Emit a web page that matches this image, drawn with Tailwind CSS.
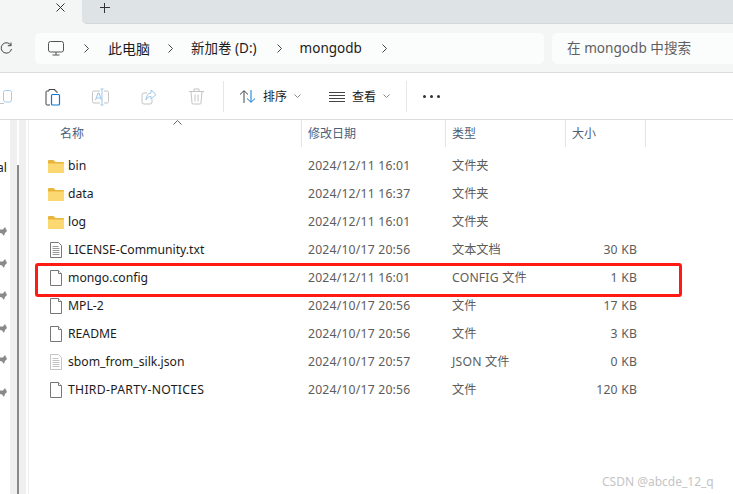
<!DOCTYPE html>
<html lang="zh-CN">
<head>
  <meta charset="UTF-8">
  <title>mongodb</title>
  <script src="https://cdn.jsdelivr.net/npm/@tailwindcss/browser@4"></script>
</head>
<body class="relative w-[733px] h-[494px] overflow-hidden bg-white font-['Noto_Sans','Noto_Sans_CJK_SC',sans-serif] text-[12.2px] text-[#1b1b1b]">

  <!-- tab strip -->
  <div class="flex h-[24px] bg-[#f4f6f6]">
    <div class="flex w-[82px] justify-end pr-[17px] pt-[3px]">
      <svg width="9" height="9" viewBox="0 0 9 9" fill="none" stroke="#333" stroke-width="1"><path d="M.5.5l8 8M8.500.5l-8 8"/></svg>
    </div>
    <div class="flex-1 rounded-bl-[5px] border-b border-[#d3d7d9] bg-[#dee3e6] pl-[18px] pt-[3px]">
      <svg width="10" height="10" viewBox="0 0 10 10" fill="none" stroke="#333" stroke-width="1"><path d="M4.500 0v10M0 4.500h10"/></svg>
    </div>
  </div>

  <!-- address row -->
  <div class="flex h-[49px] items-center border-b border-[#d9dcdc] bg-[#f4f6f6]">
    <div class="flex w-[35px] items-center">
      <svg width="12" height="13" viewBox="0 0 12 13" fill="none" stroke="#444" stroke-width="1"><path d="M11 3.500A5.200 5.200 0 1 0 11.500 7M11 .5v3.200H7.800"/></svg>
    </div>
    <div class="flex h-[31px] w-[509px] items-center rounded-[5px] bg-[#fbfcfc] pl-[13px] text-[13.5px]">
      <svg width="16" height="15" viewBox="0 0 16 15" fill="none" stroke="#555" stroke-width="1"><rect x=".5" y=".5" width="15" height="10.500" rx="2"/><path d="M8 11v3M4.500 14h7"/></svg>
      <svg class="ml-[20px]" width="5" height="9" viewBox="0 0 5 9" fill="none" stroke="#444"><path d="M.5.5l4 4-4 4"/></svg>
      <span class="ml-[19px] text-[14px]">此电脑</span>
      <svg class="ml-[18px]" width="5" height="9" viewBox="0 0 5 9" fill="none" stroke="#444"><path d="M.5.5l4 4-4 4"/></svg>
      <span class="ml-[18px]">新加卷 (D:)</span>
      <svg class="ml-[20px]" width="5" height="9" viewBox="0 0 5 9" fill="none" stroke="#444"><path d="M.5.5l4 4-4 4"/></svg>
      <span class="ml-[18px]">mongodb</span>
      <svg class="ml-[20px]" width="5" height="9" viewBox="0 0 5 9" fill="none" stroke="#444"><path d="M.5.5l4 4-4 4"/></svg>
    </div>
    <div class="ml-[8px] flex h-[31px] flex-1 items-center rounded-l-[5px] bg-[#fbfcfc] pl-[15px] text-[13.6px] text-[#5f5f5f]">在 mongodb 中搜索</div>
  </div>

  <!-- command bar -->
  <div class="flex h-[47px] items-center border-b border-[#d9dcdc] bg-white pt-[1px]">
    <svg width="12" height="16" viewBox="0 0 12 16" fill="none"><path d="M0 14.500h4" stroke="#c4c4c4"/><rect x="3.500" y="1.500" width="8" height="11.500" rx="2" stroke="#9fcdf2"/></svg>
    <svg class="ml-[33px]" width="16" height="18" viewBox="0 0 16 18" fill="none"><path d="M4 3H2a1 1 0 0 0-1 1v12a1 1 0 0 0 1 1h3" stroke="#444"/><path d="M4 3V1.500h6V3M10 3h1a1 1 0 0 1 1 1v1" stroke="#444"/><rect x="6.500" y="6.500" width="8" height="10.500" rx="1" stroke="#0b78d4" stroke-width="1.200"/></svg>
    <svg class="ml-[31px]" width="17" height="18" viewBox="0 0 17 18" fill="none" stroke="#c4c4c4"><path d="M8 3H2a1.500 1.500 0 0 0-1.500 1.500v9A1.500 1.500 0 0 0 2 15h6M12 3h3a1.500 1.500 0 0 1 1.500 1.500v9A1.500 1.500 0 0 1 15 15h-3"/><path d="M3.500 12l2.500-7h1l2.500 7M4.500 10h4" stroke="#9fc6e8"/><path d="M8.500 1h3M10 1v16M8.500 17h3" stroke="#9fc6e8"/></svg>
    <svg class="ml-[32px]" width="16" height="16" viewBox="0 0 16 16" fill="none" stroke="#c4c4c4"><path d="M11 10v3a2 2 0 0 1-2 2H3a2 2 0 0 1-2-2V6a2 2 0 0 1 2-2h3"/><path d="M10 1l5 4.500-5 4.500V7.500C7.500 7.500 6 8.500 5 11c0-4 2-6.500 5-7z" stroke="#9fc6e8"/></svg>
    <svg class="ml-[32px]" width="15" height="17" viewBox="0 0 15 17" fill="none" stroke="#c4c4c4"><path d="M0 3.500h15M5 3.500V1h5v2.500M2 3.500l1 11.500a1 1 0 0 0 1 1h7a1 1 0 0 0 1-1l1-11.500M6 6.500v7M9 6.500v7"/></svg>
    <div class="ml-[19px] h-[31px] w-px bg-[#e6e6e6]"></div>
    <svg class="ml-[15px]" width="17" height="13" viewBox="0 0 17 13" fill="none"><path d="M5 13V1M1 4.500L5 .7l4 3.800" stroke="#444"/><path d="M12 0v12M8 8.500l4 3.800 4-3.800" stroke="#0b78d4"/></svg>
    <span class="ml-[7px] text-[12px]">排序</span>
    <svg class="ml-[7px]" width="7" height="5" viewBox="0 0 7 5" fill="none" stroke="#888"><path d="M.5.5l3 3 3-3"/></svg>
    <svg class="ml-[28px]" width="16" height="10" viewBox="0 0 16 10" fill="none" stroke="#444"><path d="M0 .5h16M0 3.500h16M0 6.500h16M0 9.500h16"/></svg>
    <span class="ml-[7px] text-[12px]">查看</span>
    <svg class="ml-[7px]" width="7" height="5" viewBox="0 0 7 5" fill="none" stroke="#888"><path d="M.5.5l3 3 3-3"/></svg>
    <div class="ml-[16px] h-[31px] w-px bg-[#e6e6e6]"></div>
    <div class="ml-[16px] flex gap-[4px]">
      <span class="size-[3px] rounded-full bg-[#333]"></span>
      <span class="size-[3px] rounded-full bg-[#333]"></span>
      <span class="size-[3px] rounded-full bg-[#333]"></span>
    </div>
  </div>

  <div class="flex h-[374px]">
    <!-- nav pane sliver -->
    <div class="relative w-[10px] shrink-0 bg-white">
      <span class="absolute -left-[3px] top-[40px] text-[12px] leading-[16px]">al</span>
    </div>
    <div class="flex w-[19px] shrink-0 border-r border-[#f0f0f0] bg-white">
      <div class="w-[7px] bg-[#f0f0f0]"></div>
      <div class="mt-[45px] w-[2px] bg-[#8a8a8a]"></div>
      <div class="w-[7px] bg-[#f0f0f0]"></div>
    </div>

    <!-- file list -->
    <div class="flex-1">
      <div class="relative flex h-[27px] text-[12px] text-[#4c607a]">
        <div class="w-[272px] pl-[31px] leading-[27px]">名称</div>
        <div class="w-[144px] border-l border-[#e5e5e5] pl-[6px] leading-[27px]">修改日期</div>
        <div class="w-[120px] border-l border-[#e5e5e5] pl-[6px] leading-[27px]">类型</div>
        <div class="w-[81px] border-x border-[#e5e5e5] pl-[6px] leading-[27px]">大小</div>
        <svg class="absolute left-[144px] top-0" width="9" height="5" viewBox="0 0 9 5" fill="none" stroke="#666"><path d="M.5 4.500l4-4 4 4"/></svg>
      </div>
      <div id="rows" class="pt-[5px]">
        <div class="flex h-[28px] items-center">
          <svg class="ml-[19px]" width="16" height="14" viewBox="0 0 16 14"><path d="M0 2a1 1 0 0 1 1-1h4.500l2 2H15a1 1 0 0 1 1 1v9a1 1 0 0 1-1 1H1a1 1 0 0 1-1-1z" fill="#e8b53c"/><path d="M0 4.500h16V13a1 1 0 0 1-1 1H1a1 1 0 0 1-1-1z" fill="#fbd872"/></svg>
          <span class="ml-[4px] w-[240px]">bin</span><span class="w-[144px] tracking-[0.2px] text-[#5c5c5c]">2024/12/11 16:01</span><span class="w-[120px] text-[#5c5c5c]">文件夹</span>
        </div>
        <div class="flex h-[28px] items-center">
          <svg class="ml-[19px]" width="16" height="14" viewBox="0 0 16 14"><path d="M0 2a1 1 0 0 1 1-1h4.500l2 2H15a1 1 0 0 1 1 1v9a1 1 0 0 1-1 1H1a1 1 0 0 1-1-1z" fill="#e8b53c"/><path d="M0 4.500h16V13a1 1 0 0 1-1 1H1a1 1 0 0 1-1-1z" fill="#fbd872"/></svg>
          <span class="ml-[4px] w-[240px]">data</span><span class="w-[144px] tracking-[0.2px] text-[#5c5c5c]">2024/12/11 16:37</span><span class="w-[120px] text-[#5c5c5c]">文件夹</span>
        </div>
        <div class="flex h-[28px] items-center">
          <svg class="ml-[19px]" width="16" height="14" viewBox="0 0 16 14"><path d="M0 2a1 1 0 0 1 1-1h4.500l2 2H15a1 1 0 0 1 1 1v9a1 1 0 0 1-1 1H1a1 1 0 0 1-1-1z" fill="#e8b53c"/><path d="M0 4.500h16V13a1 1 0 0 1-1 1H1a1 1 0 0 1-1-1z" fill="#fbd872"/></svg>
          <span class="ml-[4px] w-[240px]">log</span><span class="w-[144px] tracking-[0.2px] text-[#5c5c5c]">2024/12/11 16:01</span><span class="w-[120px] text-[#5c5c5c]">文件夹</span>
        </div>
        <div class="flex h-[28px] items-center">
          <svg class="ml-[21px]" width="12" height="16" viewBox="0 0 12 16" fill="#fff" stroke="#777"><path d="M.5.500h8l3 3v12H.5z"/><path d="M2.500 4.500h6M2.500 6.500h7M2.500 8.500h7M2.500 10.500h7M2.500 12.500h7" stroke="#999"/></svg>
          <span class="ml-[6px] w-[240px]">LICENSE-Community.txt</span><span class="w-[144px] tracking-[0.2px] text-[#5c5c5c]">2024/10/17 20:56</span><span class="w-[120px] text-[#5c5c5c]">文本文档</span><span class="w-[65px] text-right tracking-[0.2px] text-[#5c5c5c]">30 KB</span>
        </div>
        <div class="flex h-[28px] items-center">
          <svg class="ml-[21px]" width="12" height="16" viewBox="0 0 12 16" fill="#fff" stroke="#777"><path d="M.5.500h8l3 3v12H.5z"/><path d="M8.500.500v3h3"/></svg>
          <span class="ml-[6px] w-[240px]">mongo.config</span><span class="w-[144px] tracking-[0.2px] text-[#5c5c5c]">2024/12/11 16:01</span><span class="w-[120px] tracking-[0.2px] text-[#5c5c5c]">CONFIG 文件</span><span class="w-[65px] text-right tracking-[0.2px] text-[#5c5c5c]">1 KB</span>
        </div>
        <div class="flex h-[28px] items-center">
          <svg class="ml-[21px]" width="12" height="16" viewBox="0 0 12 16" fill="#fff" stroke="#777"><path d="M.5.500h8l3 3v12H.5z"/><path d="M8.500.500v3h3"/></svg>
          <span class="ml-[6px] w-[240px]">MPL-2</span><span class="w-[144px] tracking-[0.2px] text-[#5c5c5c]">2024/10/17 20:56</span><span class="w-[120px] text-[#5c5c5c]">文件</span><span class="w-[65px] text-right tracking-[0.2px] text-[#5c5c5c]">17 KB</span>
        </div>
        <div class="flex h-[28px] items-center">
          <svg class="ml-[21px]" width="12" height="16" viewBox="0 0 12 16" fill="#fff" stroke="#777"><path d="M.5.500h8l3 3v12H.5z"/><path d="M8.500.500v3h3"/></svg>
          <span class="ml-[6px] w-[240px]">README</span><span class="w-[144px] tracking-[0.2px] text-[#5c5c5c]">2024/10/17 20:56</span><span class="w-[120px] text-[#5c5c5c]">文件</span><span class="w-[65px] text-right tracking-[0.2px] text-[#5c5c5c]">3 KB</span>
        </div>
        <div class="flex h-[28px] items-center">
          <svg class="ml-[21px]" width="12" height="16" viewBox="0 0 12 16" fill="#fff" stroke="#c4c4c4"><path d="M.5.500h8l3 3v12H.5z"/><path d="M2.500 4.500h6M2.500 6.500h7M2.500 8.500h7M2.500 10.500h7M2.500 12.500h7"/></svg>
          <span class="ml-[6px] w-[240px]">sbom_from_silk.json</span><span class="w-[144px] tracking-[0.2px] text-[#5c5c5c]">2024/10/17 20:57</span><span class="w-[120px] tracking-[0.2px] text-[#5c5c5c]">JSON 文件</span><span class="w-[65px] text-right tracking-[0.2px] text-[#5c5c5c]">0 KB</span>
        </div>
        <div class="flex h-[28px] items-center">
          <svg class="ml-[21px]" width="12" height="16" viewBox="0 0 12 16" fill="#fff" stroke="#777"><path d="M.5.500h8l3 3v12H.5z"/><path d="M8.500.500v3h3"/></svg>
          <span class="ml-[6px] w-[240px] tracking-[0.3px]">THIRD-PARTY-NOTICES</span><span class="w-[144px] tracking-[0.2px] text-[#5c5c5c]">2024/10/17 20:56</span><span class="w-[120px] text-[#5c5c5c]">文件</span><span class="w-[65px] text-right tracking-[0.2px] text-[#5c5c5c]">120 KB</span>
        </div>
      </div>
    </div>
  </div>

  <!-- annotation over the list -->
  <div class="absolute left-[35px] top-[263px] h-[34px] w-[647px] rounded-[3px] border-[3px] border-[#ff1a12]"></div>

  <!-- pins in nav pane -->
  <svg class="absolute left-0 top-[227px]" width="7" height="9" viewBox="0 0 7 9" fill="#8a8a8a"><path d="M0 2.500h3L5 0l2 4-2 2-1 3-2-2.500L0 6z"/></svg>
  <svg class="absolute left-0 top-[259px]" width="7" height="9" viewBox="0 0 7 9" fill="#8a8a8a"><path d="M0 2.500h3L5 0l2 4-2 2-1 3-2-2.500L0 6z"/></svg>
  <svg class="absolute left-0 top-[291px]" width="7" height="9" viewBox="0 0 7 9" fill="#8a8a8a"><path d="M0 2.500h3L5 0l2 4-2 2-1 3-2-2.500L0 6z"/></svg>
  <svg class="absolute left-0 top-[324px]" width="7" height="9" viewBox="0 0 7 9" fill="#8a8a8a"><path d="M0 2.500h3L5 0l2 4-2 2-1 3-2-2.500L0 6z"/></svg>
  <svg class="absolute left-0 top-[355px]" width="7" height="9" viewBox="0 0 7 9" fill="#8a8a8a"><path d="M0 2.500h3L5 0l2 4-2 2-1 3-2-2.500L0 6z"/></svg>
  <svg class="absolute left-0 top-[388px]" width="7" height="9" viewBox="0 0 7 9" fill="#8a8a8a"><path d="M0 2.500h3L5 0l2 4-2 2-1 3-2-2.500L0 6z"/></svg>

  <div class="absolute left-[602px] top-[474px] text-[12px] leading-[16px] text-[#c4c4c4]">CSDN @abcde_12_q</div>
</body>
</html>
